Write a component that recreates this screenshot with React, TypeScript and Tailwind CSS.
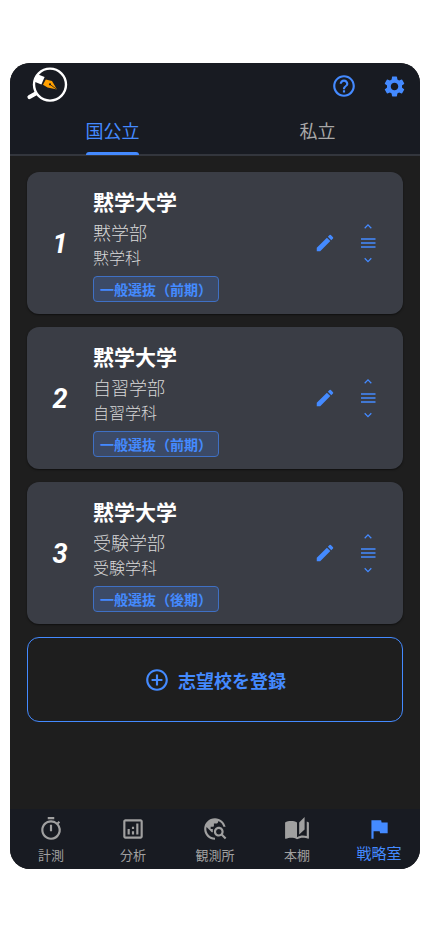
import { useState } from "react";
import type { IconType } from "react-icons";
import {
  MdAddCircleOutline,
  MdAutoStories,
  MdEdit,
  MdFlag,
  MdHelpOutline,
  MdOutlineAnalytics,
  MdOutlineTimer,
  MdSettings,
  MdTravelExplore,
} from "react-icons/md";

type School = { university: string; faculty: string; department: string; exam: string };

const schools: School[] = [
  { university: "黙学大学", faculty: "黙学部", department: "黙学科", exam: "一般選抜（前期）" },
  { university: "黙学大学", faculty: "自習学部", department: "自習学科", exam: "一般選抜（前期）" },
  { university: "黙学大学", faculty: "受験学部", department: "受験学科", exam: "一般選抜（後期）" },
];

const navItems: { label: string; icon: IconType }[] = [
  { label: "計測", icon: MdOutlineTimer },
  { label: "分析", icon: MdOutlineAnalytics },
  { label: "観測所", icon: MdTravelExplore },
  { label: "本棚", icon: MdAutoStories },
  { label: "戦略室", icon: MdFlag },
];

function Logo() {
  return (
    <svg viewBox="0 0 42 40" className="h-10 w-[42px]" aria-label="ロゴ" role="img">
      <path d="M11.5 26.5 3.5 31" stroke="#fff" strokeWidth="4.2" strokeLinecap="round" />
      <circle cx="24" cy="18.6" r="16" fill="#181b22" stroke="#fff" strokeWidth="2.4" />
      <path d="M11 8 18.6 11 15.4 18.4 8.5 15.8Z" fill="#fff" />
      <path d="M19.8 13.6 26 15 31 23.5 21.5 21.4 17 18.8Z" fill="#ffa000" />
      <path d="M31 23.5 24.5 18.8" stroke="#181b22" strokeWidth="0.8" />
      <circle cx="24" cy="18.3" r="1.1" fill="#181b22" />
    </svg>
  );
}

function ReorderIcon() {
  return (
    <svg viewBox="0 0 16 42" className="h-[42px] w-4" fill="none" stroke="currentColor" strokeWidth="1.3">
      <path d="M4.7 6.2 8 2.9 11.3 6.2M4.7 36.3 8 39.6 11.3 36.3" />
      <path d="M1 17h14.5M1 21h14.5M1 25h14.5" />
    </svg>
  );
}

function SchoolCard({ rank, school }: { rank: number; school: School }) {
  return (
    <li className="flex items-center rounded-xl bg-[#3a3d45] py-3 shadow-[0_1px_2px_#00000080]">
      <span className="w-[66px] pt-[3px] text-center font-['Roboto'] text-[27px] font-bold italic text-white">
        {rank}
      </span>
      <div className="flex-1 pt-[3px]">
        <h2 className="text-[21px] leading-7 font-bold text-white">{school.university}</h2>
        <p className="mt-1 text-lg leading-[26px] font-light text-[#d8d8d8]">{school.faculty}</p>
        <p className="text-base leading-6 font-light text-[#d8d8d8]">{school.department}</p>
        <span className="mt-[7px] inline-block rounded-[4px] border border-[#3f70c4] bg-[#3c4a66] px-[6px] text-sm leading-6 font-bold text-[#448aff]">
          {school.exam}
        </span>
      </div>
      <button type="button" aria-label="編集" className="mr-6 text-[#448aff]">
        <MdEdit size={22} />
      </button>
      <button type="button" aria-label="並べ替え" className="mr-[27px] text-[#448aff]">
        <ReorderIcon />
      </button>
    </li>
  );
}

export default function App() {
  const [tab, setTab] = useState("国公立");
  return (
    <div className="min-h-screen bg-white px-[10px] py-[63px] font-['Noto_Sans_CJK_JP',sans-serif]">
      <div className="flex min-h-[calc(100vh-126px)] flex-col overflow-hidden rounded-[20px] bg-[#1e1e1e]">
        <header className="border-b-2 border-[#33363d] bg-[#181b22]">
          <div className="flex h-[46px] items-center pr-[13px] pl-4">
            <Logo />
            <button type="button" aria-label="ヘルプ" className="ml-auto text-[#448aff]">
              <MdHelpOutline size={26} />
            </button>
            <button type="button" aria-label="設定" className="ml-[25px] text-[#448aff]">
              <MdSettings size={25} />
            </button>
          </div>
          <div role="tablist" className="flex h-[45px]">
            {["国公立", "私立"].map((name) => (
              <button
                key={name}
                type="button"
                role="tab"
                aria-selected={tab === name}
                onClick={() => setTab(name)}
                className="-mb-px flex flex-1 flex-col items-center justify-between"
              >
                <span
                  className={
                    tab === name
                      ? "pt-[7px] text-lg leading-7 text-[#448aff]"
                      : "pt-[7px] text-lg leading-7 text-[#a8a8a8]"
                  }
                >
                  {name}
                </span>
                {tab === name && <span className="h-[3px] w-[53px] rounded-t-[3px] bg-[#448aff]" />}
              </button>
            ))}
          </div>
        </header>

        <main className="flex-1 px-[17px] pt-4 pb-6">
          <ol className="flex flex-col gap-[13px]">
            {schools.map((school, i) => (
              <SchoolCard key={school.faculty} rank={i + 1} school={school} />
            ))}
          </ol>
          <button
            type="button"
            className="mt-[13px] flex h-[85px] w-full items-center justify-center gap-2 rounded-xl border border-[#448aff] text-lg font-bold text-[#448aff]"
          >
            <MdAddCircleOutline size={26} />
            志望校を登録
          </button>
        </main>

        <nav className="grid h-[60px] grid-cols-5 bg-[#181b22]">
          {navItems.map(({ label, icon: Icon }, i) => {
            const active = i === navItems.length - 1;
            return (
              <a
                key={label}
                href="#"
                aria-current={active ? "page" : undefined}
                className={
                  active
                    ? "flex flex-col items-center pt-[7px] text-[15px] leading-[22px] text-[#448aff]"
                    : "flex flex-col items-center pt-[7px] text-[13px] leading-[26px] text-[#a0a0a0]"
                }
              >
                <Icon size={26} />
                {label}
              </a>
            );
          })}
        </nav>
      </div>
    </div>
  );
}
